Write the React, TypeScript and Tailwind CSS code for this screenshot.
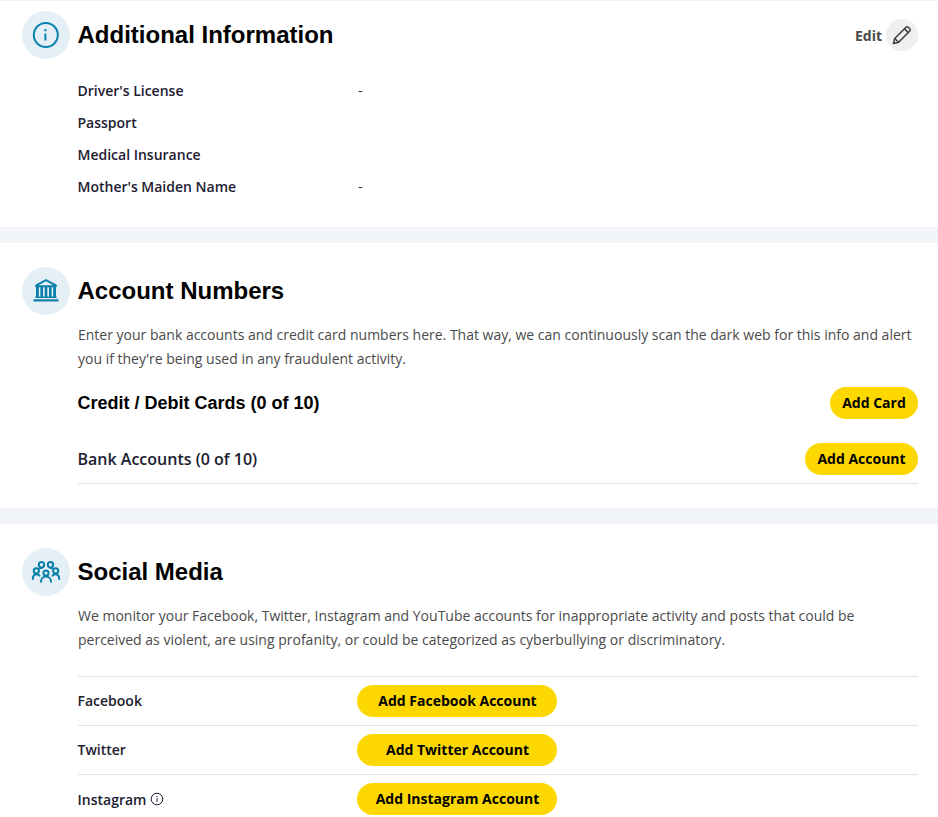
import React from "react";

const open = "font-['Open_Sans',sans-serif]";
const head = "font-['Liberation_Sans',Arial,sans-serif]";

function Circle({ children }: { children: React.ReactNode }) {
  return (
    <div className="w-12 h-12 rounded-full bg-[#e4eff6] flex items-center justify-center shrink-0 mr-2">
      {children}
    </div>
  );
}

function Title({ children }: { children: React.ReactNode }) {
  return <h2 className={`${head} -ml-[0.5px] text-[24px] leading-[48px] font-bold text-black`}>{children}</h2>;
}

function Btn({ children, className = "" }: { children: React.ReactNode; className?: string }) {
  return (
    <button className={`${open} h-8 pb-[2px] rounded-full bg-[#fdd800] text-[14px] font-bold text-black flex items-center justify-center ${className}`}>
      {children}
    </button>
  );
}

function Info({ label, value }: { label: string; value?: string }) {
  return (
    <div className="flex h-8 items-center pb-[2px]">
      <div className="w-[280px] -ml-[0.5px] mr-[0.5px] text-[14px] font-semibold text-[#1c2030]">{label}</div>
      <div className="text-[14px] text-[#333]">{value}</div>
    </div>
  );
}

function SocialRow({ label, action, info, up = true }: { label: string; action: string; info?: boolean; up?: boolean }) {
  return (
    <div className="flex h-[49px] items-center border-t border-[#e2e2e2]">
      <div className={`w-[279px] -ml-[0.5px] mr-[0.5px] flex items-center text-[14px] font-semibold text-[#1c2030] ${up ? "pb-[2px]" : ""}`}>
        {label}
        {info && (
          <svg className="ml-[3.5px]" width="14" height="14" viewBox="0 0 14 14" fill="none" stroke="#1c2030" strokeWidth="1">
            <circle cx="7" cy="7" r="5.8" />
            <path d="M7 6.200v3.600M7 4v1.100" />
          </svg>
        )}
      </div>
      <Btn className="w-[200px] pl-px">{action}</Btn>
    </div>
  );
}

export default function App() {
  return (
    <div className={`${open} w-[938px] h-[817px] overflow-hidden bg-white`}>
      <section className="h-[227px] pt-[11px] pl-[22px] pr-5 border-t border-[#f4f4f4]">
        <div className="flex items-center -mt-px">
          <Circle>
            <svg width="30" height="30" viewBox="0 0 30 30" fill="none" stroke="#0a82ad" strokeWidth="2">
              <circle cx="14.800" cy="15" r="12" />
              <path d="M14.400 13.500v7M14.400 9v2.200" />
            </svg>
          </Circle>
          <Title>Additional Information</Title>
          <div className="ml-auto flex items-center">
            <span className="text-[14px] font-bold text-[#4a4a4a] mr-1 -ml-px">Edit</span>
            <div className="w-8 h-8 rounded-full bg-[#efefef] flex items-center justify-center">
              <svg width="20" height="20" viewBox="0 0 20 20" fill="none" stroke="#3c3c3c" strokeWidth="1.5" strokeLinejoin="round">
                <path d="M1.500 18.500l1.200-5L14 2.200a1.600 1.600 0 0 1 2.200 0l1.600 1.600a1.600 1.600 0 0 1 0 2.200L6.700 17.300l-5.200 1.200z" />
                <path d="M2.700 13.500l4 3.800M12.400 3.800l3.800 3.800" />
              </svg>
            </div>
          </div>
        </div>
        <div className="pl-14 mt-4">
          <Info label="Driver's License" value="-" />
          <Info label="Passport" />
          <Info label="Medical Insurance" />
          <Info label="Mother's Maiden Name" value="-" />
        </div>
      </section>
      <div className="h-4 bg-[#f1f4f8]" />
      <section className="h-[265px] pt-6 pl-[22px] pr-5">
        <div className="flex items-center">
          <Circle>
            <svg width="26" height="24" viewBox="0 0 26 24" fill="#0a7fab">
              <path d="M13 1.200L3.200 6.300v1h19.600v-1L13 1.200z" fill="none" stroke="#0a7fab" strokeWidth="2" strokeLinejoin="round" />
              <path d="M3 8h2.800v9.500H3zM7.400 8h2.600v9.500H7.400zM11.700 8h2.600v9.500h-2.600zM16 8h2.600v9.500H16zM20.200 8H23v9.500h-2.800zM2.500 17.600h21v1.500h-21zM0.500 20.200h25v2.200h-25z" />
            </svg>
          </Circle>
          <Title>Account Numbers</Title>
        </div>
        <div className="pl-14">
          <p className="text-[14px] leading-6 text-[#4a4a4a] mt-2">
            Enter your bank accounts and credit card numbers here. That way, we can continuously scan the dark web for this info and alert you if they're being used in any fraudulent activity.
          </p>
          <div className="flex items-center justify-between mt-4">
            <h3 className={`${head} -ml-[0.5px] text-[18px] font-bold text-black`}>Credit / Debit Cards (0 of 10)</h3>
            <Btn className="w-[88px]">Add Card</Btn>
          </div>
          <div className="flex items-center justify-between mt-6 pb-2 border-b border-[#e2e2e2]">
            <span className="-ml-[0.5px] text-[16px] font-semibold text-[#1c2030]">Bank Accounts (0 of 10)</span>
            <Btn className="w-[113px]">Add Account</Btn>
          </div>
        </div>
      </section>
      <div className="h-4 bg-[#f1f4f8]" />
      <section className="pt-6 pl-[22px] pr-5">
        <div className="flex items-center">
          <Circle>
            <svg width="30" height="24" viewBox="0 0 30 24" fill="none" stroke="#0a7fab" strokeWidth="2" strokeLinecap="round">
              <circle cx="10.500" cy="4.800" r="2.700" />
              <circle cx="19.500" cy="4.800" r="2.700" />
              <circle cx="5.300" cy="10.800" r="2.600" />
              <circle cx="15" cy="13" r="2.600" />
              <circle cx="24.700" cy="10.800" r="2.600" />
              <path d="M1.800 19c0-3 1.500-4.800 3.700-4.800 1.300 0 2.300.5 3 1.400M28.200 19c0-3-1.500-4.800-3.700-4.800-1.300 0-2.300.5-3 1.400M10 21.800c0-3 2-5.200 5-5.200s5 2.200 5 5.200M8.500 8.500c.5-.4 1.200-.6 2-.6M21.500 8.500c-.5-.4-1.200-.6-2-.6" />
            </svg>
          </Circle>
          <Title>Social Media</Title>
        </div>
        <div className="pl-14">
          <p className="text-[14px] leading-6 text-[#4a4a4a] mt-2 mb-6">
            We monitor your Facebook, Twitter, Instagram and YouTube accounts for inappropriate activity and posts that could be perceived as violent, are using profanity, or could be categorized as cyberbullying or discriminatory.
          </p>
          <SocialRow label="Facebook" action="Add Facebook Account" />
          <SocialRow label="Twitter" action="Add Twitter Account" />
          <SocialRow label="Instagram" action="Add Instagram Account" info up={false} />
        </div>
      </section>
    </div>
  );
}
